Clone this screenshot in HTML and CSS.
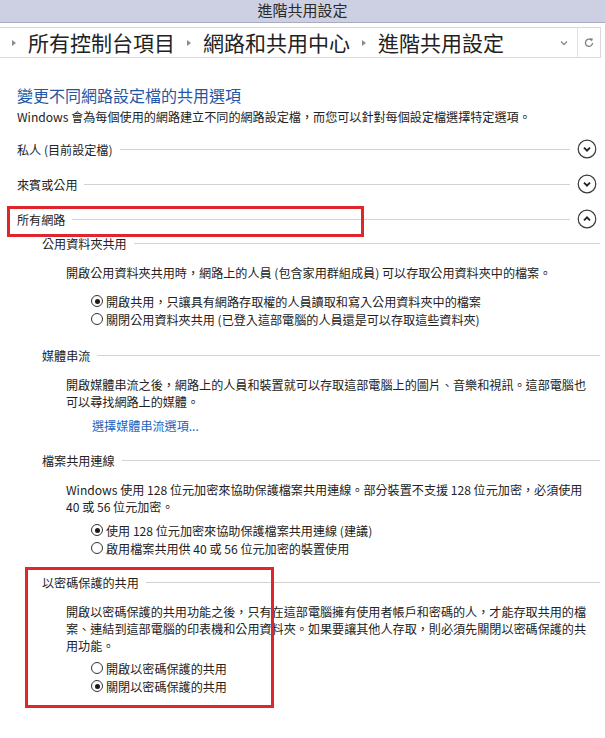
FILE: index.html
```html
<!DOCTYPE html>
<html lang="zh-Hant">
<head>
    <meta charset="UTF-8">
    <meta name="viewport" content="width=device-width, initial-scale=1.0">
    <title>進階共用設定</title>
    <link rel="stylesheet" href="styles.css">
</head>
<body>
<div class="window">
    <header class="titlebar">進階共用設定</header>

    <nav class="addressbar">
        <div class="crumbs">
            <span class="sep"></span>
            <span>所有控制台項目</span>
            <span class="sep"></span>
            <span>網路和共用中心</span>
            <span class="sep"></span>
            <span>進階共用設定</span>
        </div>
        <span class="dropdown">
            <svg width="8" height="6" viewBox="0 0 8 6"><polyline points="1,1.5 4,4.5 7,1.5" fill="none" stroke="#8a8a8a" stroke-width="1.3"/></svg>
        </span>
        <span class="refresh">
            <svg width="10" height="11" viewBox="0 0 10 11"><path d="M7.6 3.2 A3.6 3.6 0 1 0 8.6 6" fill="none" stroke="#808080" stroke-width="1.3"/><polygon points="5.6,1.2 8.9,1.4 8,4.6" fill="#808080"/></svg>
        </span>
    </nav>

    <main class="content">
        <h1 class="heading">變更不同網路設定檔的共用選項</h1>
        <p class="intro">Windows 會為每個使用的網路建立不同的網路設定檔，而您可以針對每個設定檔選擇特定選項。</p>

        <div class="profile profile-first">
            <span>私人 (目前設定檔)</span>
            <span class="rule"></span>
            <svg class="toggle" width="20" height="20" viewBox="0 0 20 20"><circle cx="10" cy="10" r="8.8" fill="none" stroke="#3a3a3a" stroke-width="1.2"/><polyline points="7,8.6 10,11.6 13,8.6" fill="none" stroke="#222" stroke-width="1.9"/></svg>
        </div>
        <div class="profile">
            <span>來賓或公用</span>
            <span class="rule"></span>
            <svg class="toggle" width="20" height="20" viewBox="0 0 20 20"><circle cx="10" cy="10" r="8.8" fill="none" stroke="#3a3a3a" stroke-width="1.2"/><polyline points="7,8.6 10,11.6 13,8.6" fill="none" stroke="#222" stroke-width="1.9"/></svg>
        </div>
        <div class="profile">
            <span>所有網路</span>
            <span class="rule"></span>
            <svg class="toggle" width="20" height="20" viewBox="0 0 20 20"><circle cx="10" cy="10" r="8.8" fill="none" stroke="#3a3a3a" stroke-width="1.2"/><polyline points="7,11.4 10,8.4 13,11.4" fill="none" stroke="#222" stroke-width="1.9"/></svg>
        </div>

        <section class="group group-first">
            <div class="group-title"><span>公用資料夾共用</span><span class="rule"></span></div>
            <p class="group-text">開啟公用資料夾共用時，網路上的人員 (包含家用群組成員) 可以存取公用資料夾中的檔案。</p>
            <ul class="options options-wide">
                <li><span class="radio checked"></span>開啟共用，只讓具有網路存取權的人員讀取和寫入公用資料夾中的檔案</li>
                <li><span class="radio"></span>關閉公用資料夾共用 (已登入這部電腦的人員還是可以存取這些資料夾)</li>
            </ul>
        </section>

        <section class="group">
            <div class="group-title"><span>媒體串流</span><span class="rule"></span></div>
            <p class="group-text">開啟媒體串流之後，網路上的人員和裝置就可以存取這部電腦上的圖片、音樂和視訊。這部電腦也可以尋找網路上的媒體。</p>
            <a class="group-link" href="#">選擇媒體串流選項...</a>
        </section>

        <section class="group">
            <div class="group-title"><span>檔案共用連線</span><span class="rule"></span></div>
            <p class="group-text">Windows 使用 128 位元加密來協助保護檔案共用連線。部分裝置不支援 128 位元加密，必須使用 40 或 56 位元加密。</p>
            <ul class="options">
                <li><span class="radio checked"></span>使用 128 位元加密來協助保護檔案共用連線 (建議)</li>
                <li><span class="radio"></span>啟用檔案共用供 40 或 56 位元加密的裝置使用</li>
            </ul>
        </section>

        <section class="group">
            <div class="group-title"><span>以密碼保護的共用</span><span class="rule"></span></div>
            <p class="group-text">開啟以密碼保護的共用功能之後，只有在這部電腦擁有使用者帳戶和密碼的人，才能存取共用的檔案、連結到這部電腦的印表機和公用資料夾。如果要讓其他人存取，則必須先關閉以密碼保護的共用功能。</p>
            <ul class="options options-tight">
                <li><span class="radio"></span>開啟以密碼保護的共用</li>
                <li><span class="radio checked"></span>關閉以密碼保護的共用</li>
            </ul>
        </section>
    </main>

    <!-- red annotation boxes drawn over the screenshot -->
    <div class="mark mark-all"></div>
    <div class="mark mark-password"></div>
</div>
</body>
</html>
```

FILE: styles.css
```css
body {
    margin: 0;
    font-family: "Noto Sans CJK TC", "Microsoft JhengHei", sans-serif;
    font-size: 12.1px;
    color: #222;
    background-color: #fff;
}
.window {
    position: relative;
    min-height: 738px;
}
.titlebar {
    height: 22px;
    line-height: 20px;
    background-color: #cdd0e3;
    border-bottom: 1px solid #a9acbf;
    text-align: center;
    font-size: 15px;
    color: #2a2a2a;
}
.addressbar {
    display: flex;
    align-items: center;
    height: 29px;
    margin: 4px 4px 0 0;
    border: 1px solid #d9d9d9;
    border-left: 0;
}
.crumbs {
    flex: 1;
    display: flex;
    align-items: center;
    gap: 12px;
    padding-left: 12px;
    font-size: 21px;
    line-height: 1;
    color: #222;
}
.sep {
    width: 0;
    height: 0;
    border-left: 4px solid #8c8c8c;
    border-top: 3.5px solid transparent;
    border-bottom: 3.5px solid transparent;
}
.dropdown {
    display: flex;
    padding: 0 9px 0 6px;
}
.refresh {
    display: flex;
    align-items: center;
    justify-content: center;
    width: 22px;
    height: 100%;
    border-left: 1px solid #e2e2e2;
}
.content {
    padding: 0 5px 0 17px;
}
.heading {
    margin: 26px 0 0;
    font-size: 16px;
    font-weight: normal;
    line-height: 22px;
    color: #1f57a4;
}
.intro {
    margin: 2px 0 0;
    line-height: 17px;
}
.profile {
    display: flex;
    align-items: center;
    height: 24px;
    margin-top: 11px;
    padding-right: 3px;
}
.profile-first {
    margin-top: 12px;
}
.rule {
    flex: 1;
    height: 1px;
    margin-left: 7px;
    background-color: #d2d2d2;
}
.toggle {
    margin-left: 7px;
}
.group {
    padding-left: 25px;
    margin-bottom: 15px;
}
.group-first {
    margin-top: 2px;
    margin-bottom: 17px;
}
.group-title {
    display: flex;
    align-items: center;
    height: 20px;
}
.group-text {
    margin: 11px 8px 0 24px;
    line-height: 17px;
}
.options {
    list-style: none;
    margin: 6px 0 0 49px;
    padding: 0;
}
.options-wide {
    margin-top: 11px;
}
.options-tight {
    margin-top: 5px;
}
.options li {
    display: flex;
    align-items: center;
    height: 18px;
}
.radio {
    position: relative;
    box-sizing: border-box;
    width: 12px;
    height: 12px;
    margin-right: 3px;
    border: 1px solid #333;
    border-radius: 50%;
    background-color: #fff;
}
.radio.checked::after {
    content: "";
    position: absolute;
    left: 2.5px;
    top: 2.5px;
    width: 5px;
    height: 5px;
    border-radius: 50%;
    background-color: #1a1a1a;
}
.group-link {
    display: block;
    margin: 7px 0 0 50px;
    line-height: 18px;
    color: #1c64c0;
    text-decoration: none;
}
.mark {
    position: absolute;
    border: 3px solid #e0262d;
    box-sizing: border-box;
}
.mark-all {
    left: 7px;
    top: 206px;
    width: 357px;
    height: 31px;
}
.mark-password {
    left: 25px;
    top: 567px;
    width: 249px;
    height: 141px;
}
```
